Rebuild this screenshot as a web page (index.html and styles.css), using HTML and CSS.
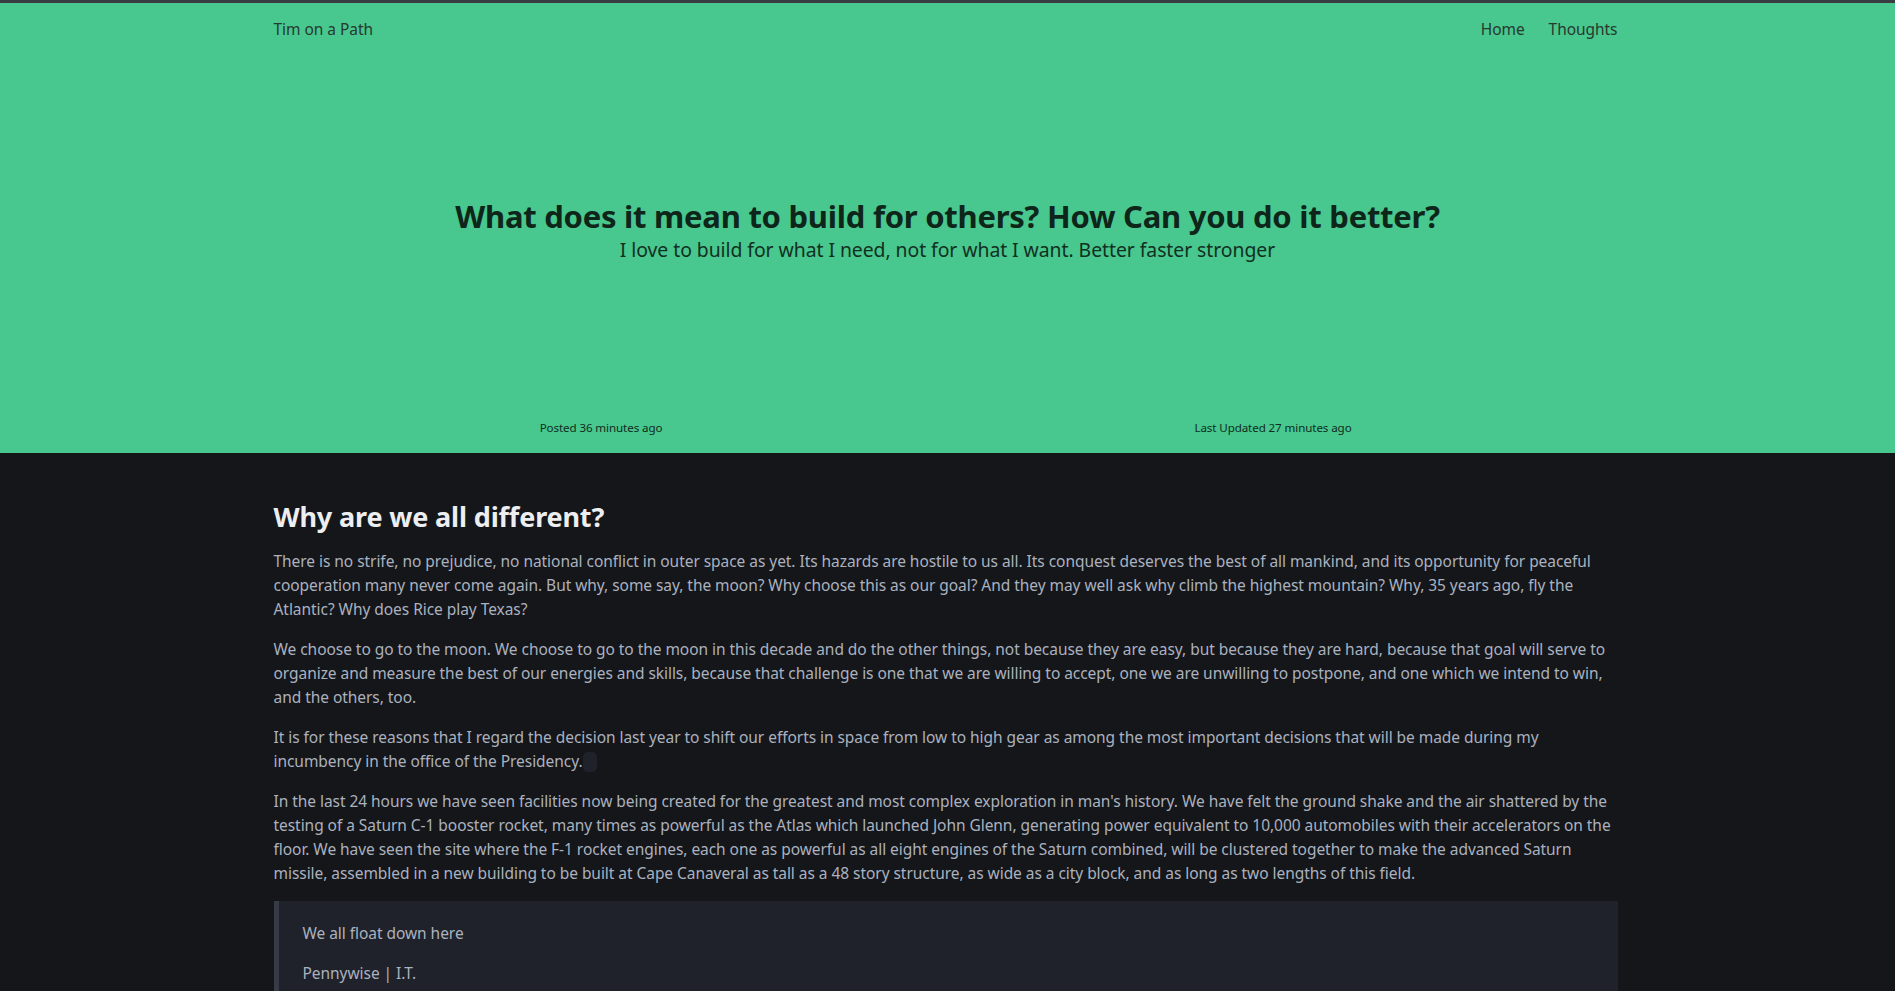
FILE: index.html
```html
<!DOCTYPE html>
<html lang="en">
<head>
<meta charset="utf-8">
<title>What does it mean to build for others? | Tim on a Path</title>
<link rel="stylesheet" href="styles.css">
</head>
<body>
<section class="hero">
  <header class="navbar">
    <div class="container nav-inner">
      <a class="brand" href="#">Tim on a Path</a>
      <nav class="menu">
        <a class="menu-item" href="#">Home</a>
        <a class="menu-item" href="#">Thoughts</a>
      </nav>
    </div>
  </header>
  <div class="hero-body">
    <h1 class="hero-title">What does it mean to build for others? How Can you do it better?</h1>
    <p class="hero-subtitle">I love to build for what I need, not for what I want. Better faster stronger</p>
  </div>
  <div class="container hero-foot">
    <div class="foot-col">Posted 36 minutes ago</div>
    <div class="foot-col">Last Updated 27 minutes ago</div>
  </div>
</section>
<main class="section">
  <article class="container content">
    <h2>Why are we all different?</h2>
    <p>There is no strife, no prejudice, no national conflict in outer space as yet. Its hazards are hostile to us all. Its conquest deserves the best of all mankind, and its opportunity for peaceful cooperation many never come again. But why, some say, the moon? Why choose this as our goal? And they may well ask why climb the highest mountain? Why, 35 years ago, fly the Atlantic? Why does Rice play Texas?</p>
    <p>We choose to go to the moon. We choose to go to the moon in this decade and do the other things, not because they are easy, but because they are hard, because that goal will serve to organize and measure the best of our energies and skills, because that challenge is one that we are willing to accept, one we are unwilling to postpone, and one which we intend to win, and the others, too.</p>
    <p>It is for these reasons that I regard the decision last year to shift our efforts in space from low to high gear as among the most important decisions that will be made during my incumbency in the office of the Presidency.<code class="code"></code></p>
    <p>In the last 24 hours we have seen facilities now being created for the greatest and most complex exploration in man's history. We have felt the ground shake and the air shattered by the testing of a Saturn C-1 booster rocket, many times as powerful as the Atlas which launched John Glenn, generating power equivalent to 10,000 automobiles with their accelerators on the floor. We have seen the site where the F-1 rocket engines, each one as powerful as all eight engines of the Saturn combined, will be clustered together to make the advanced Saturn missile, assembled in a new building to be built at Cape Canaveral as tall as a 48 story structure, as wide as a city block, and as long as two lengths of this field.</p>
    <blockquote class="quote">
      <p>We all float down here</p>
      <p>Pennywise | I.T.</p>
    </blockquote>
  </article>
</main>
</body>
</html>
```
FILE: styles.css
```css
html {
  background: #14161a;
}
body {
  margin: 0;
  font-family: "Noto Sans", "DejaVu Sans", sans-serif;
  color: #abb1bf;
  font-size: 15.5px;
  letter-spacing: -0.05px;
  line-height: 24px;
}
a {
  text-decoration: none;
  color: inherit;
}
.container {
  box-sizing: border-box;
  max-width: 1348px;
  padding-right: 4px;
  margin: 0 auto;
}

/* hero */
.hero {
  background: #48c78e;
  border-top: 3px solid #393c41;
  color: #0f2b1e;
}
.navbar {
  height: 52px;
}
.nav-inner {
  height: 100%;
  display: flex;
  align-items: center;
  justify-content: space-between;
}
.brand,
.menu-item {
  color: #27392f;
  font-size: 15.5px;
}
.menu {
  display: flex;
  gap: 24px;
}
.hero-body {
  padding: 143px 24px 142px;
  text-align: center;
}
.hero-title {
  margin: 0 0 3px;
  font-size: 31px;
  line-height: 36px;
  font-weight: 700;
  letter-spacing: -0.25px;
  color: #0e2519;
}
.hero-subtitle {
  margin: 0;
  font-size: 19.4px;
  line-height: 25px;
  letter-spacing: -0.06px;
  color: #12301f;
}
.hero-foot {
  display: grid;
  grid-template-columns: 1fr 1fr;
  padding: 15px 4px 16px 0;
}
.foot-col {
  padding-right: 17px;
  text-align: center;
  font-size: 11.6px;
  line-height: 18px;
  letter-spacing: -0.1px;
  color: #102d20;
}

/* content */
.section {
  padding: 48px 0;
}
.content h2 {
  margin: 0 0 16px;
  font-size: 27px;
  line-height: 31.5px;
  font-weight: 700;
  letter-spacing: -0.15px;
  color: #eceef1;
}
.content p {
  margin: 0 0 16px;
}
.code {
  display: inline-block;
  width: 14px;
  height: 20px;
  vertical-align: -5px;
  background: #1f222a;
  border-radius: 5px;
}
.quote {
  margin: 0;
  padding: 20px 24px;
  background: #1f222a;
  border-left: 5px solid #363b46;
}
.quote p:last-child {
  margin-bottom: 0;
}
```
